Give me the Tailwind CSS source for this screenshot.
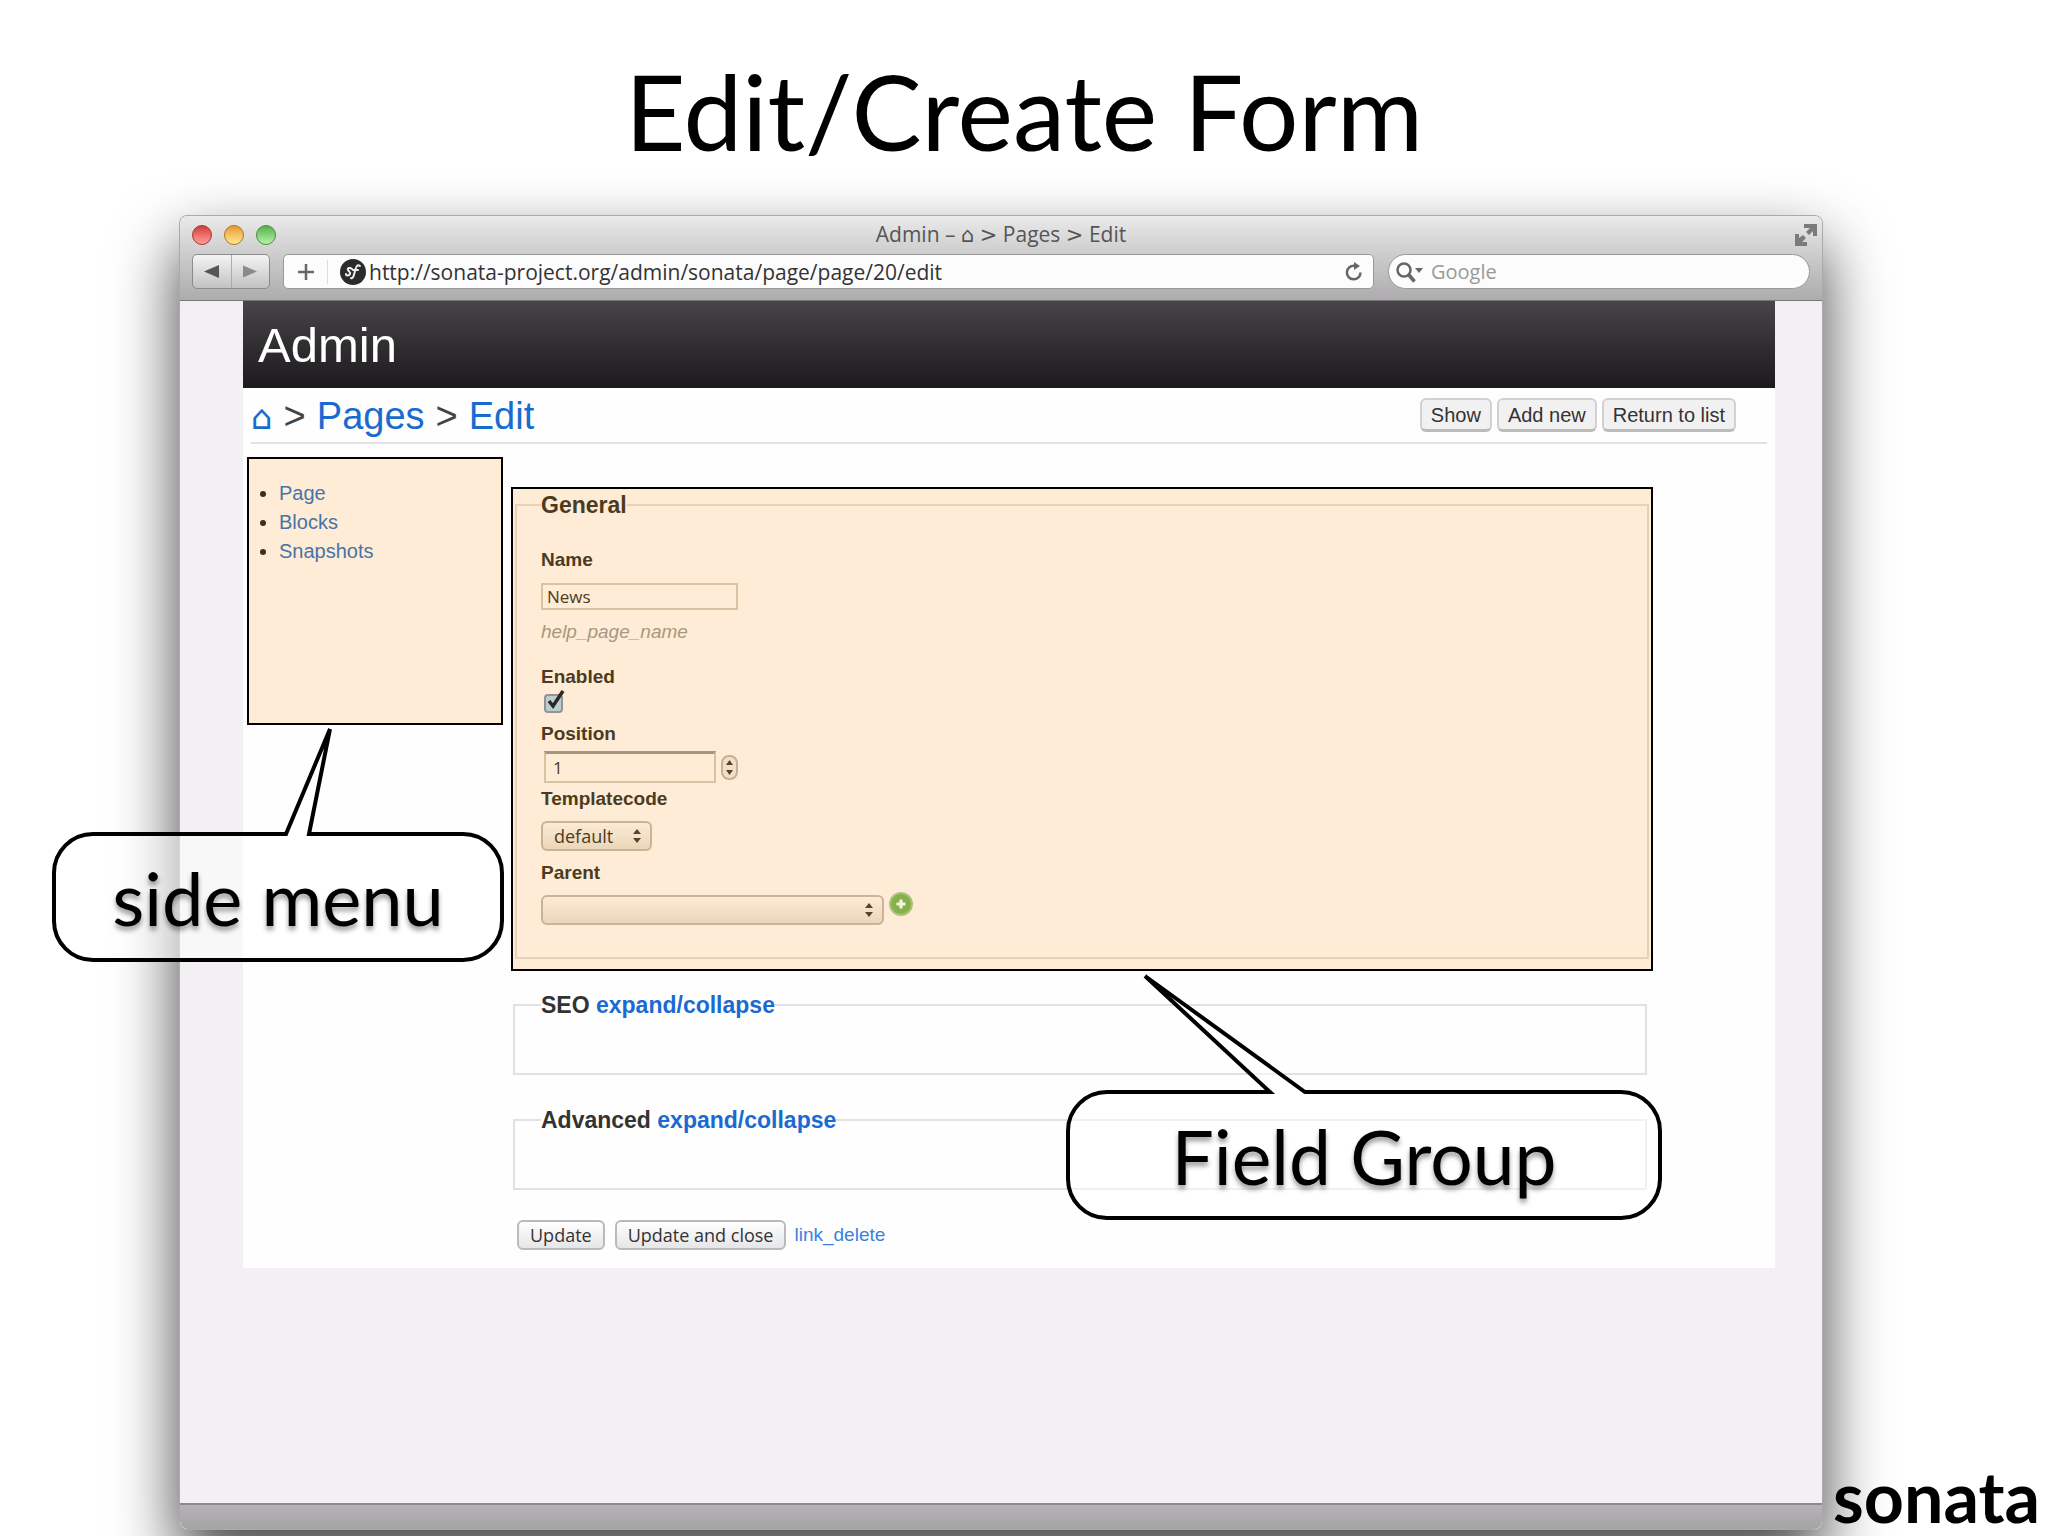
<!DOCTYPE html>
<html lang="en">
<head>
  <meta charset="UTF-8" />
  <meta name="viewport" content="width=device-width, initial-scale=1.0" />
  <title>Edit/Create Form</title>
  <script src="https://cdn.jsdelivr.net/npm/@tailwindcss/browser@4"></script>
</head>
<body class="bg-white font-['Liberation_Sans',Arial,sans-serif] text-[19px] text-[#333]">
  <main class="relative flex min-h-screen flex-col overflow-hidden pb-[6px]">
    <h1 class="pt-[46px] text-center font-[Lato,sans-serif] text-[105px] leading-[128px] text-black">Edit/Create Form</h1>

    <!-- browser window -->
    <div class="mt-[41px] mr-[225px] ml-[179px] flex flex-1 flex-col rounded-lg border border-[#aaa] bg-[#f2f0f3] shadow-[0_30px_64px_0_rgba(0,0,0,0.75)]">
      <header class="rounded-t-lg border-b border-[#777] bg-linear-to-b from-[#eaeaea] to-[#adabad] px-[12px] pb-[11px] font-['Open_Sans',sans-serif]">
        <div class="flex h-[38px] items-center justify-between">
          <div class="flex w-[90px] gap-[12px]">
            <span class="size-[20px] rounded-full border border-[#a33] bg-linear-to-b from-[#d33b3b] to-[#ff9d96]"></span>
            <span class="size-[20px] rounded-full border border-[#a8752a] bg-linear-to-b from-[#e69a2e] to-[#ffe98f]"></span>
            <span class="size-[20px] rounded-full border border-[#4a8a3f] bg-linear-to-b from-[#55b04c] to-[#b5f3a6]"></span>
          </div>
          <div class="text-[21px] text-[#555]">Admin – <span class="font-['DejaVu_Sans',sans-serif]">⌂</span> <span class="font-['DejaVu_Sans',sans-serif]">&gt;</span> Pages <span class="font-['DejaVu_Sans',sans-serif]">&gt;</span> Edit</div>
          <div class="flex w-[90px] justify-end">
            <svg class="-mr-2 size-[24px]" viewBox="0 0 24 24" fill="#7b7b7b"><path d="M10 1h13v12h-4V8l-4 4-3-3 4-4h-6zM1 11h4v4l4-3 3 3-4 4h5v4H1z" /></svg>
          </div>
        </div>
        <div class="flex h-[35px] items-stretch">
          <div class="flex w-[78px] rounded-[5px] border border-[#8b8b8b] bg-linear-to-b from-[#f4f4f4] to-[#c2c2c2]">
            <button aria-label="Back" class="flex flex-1 items-center justify-center border-r border-[#aaa]"><svg class="h-[13px] w-[15px]" viewBox="0 0 15 13" fill="#555"><path d="M0 6.500 15 0v13z" /></svg></button>
            <button aria-label="Forward" class="flex flex-1 items-center justify-center"><svg class="h-[13px] w-[14px]" viewBox="0 0 15 13" fill="#8b8b8b"><path d="M15 6.500 0 0v13z" /></svg></button>
          </div>
          <div class="ml-[13px] flex flex-1 items-center rounded-[5px] border border-[#999] bg-[#fdfcfd]">
            <button aria-label="New bookmark" class="flex h-[24px] w-[44px] items-center justify-center border-r border-[#ddd]"><svg class="size-[16px]" viewBox="0 0 16 16" stroke="#666" stroke-width="2.500"><path d="M8 0v16M0 8h16" /></svg></button>
            <svg class="ml-[12px] size-[26px]" viewBox="0 0 26 26" fill="none" stroke="#eee" stroke-width="2" stroke-linecap="round"><circle cx="13" cy="13" r="13" fill="#2b2b2b" stroke="none" /><path d="M12 10c-2-2-5-1-4 1s3 2 2 4-4 2-4 0M20 7c-3-2-4 1-5 5s-2 8-4 7M13 11h5" /></svg>
            <input aria-label="Address" value="http://sonata-project.org/admin/sonata/page/page/20/edit" class="ml-[3px] flex-1 bg-transparent text-[21px] leading-[28px] text-[#333] outline-none" />
            <button aria-label="Reload" class="mr-[9px]"><svg class="size-[20px]" viewBox="0 0 20 20" fill="none" stroke="#666" stroke-width="2.500"><path d="M16.500 10.500a6.800 6.800 0 1 1-6-6.700" /><path d="M10 0v8l6-4z" fill="#666" stroke="none" /></svg></button>
          </div>
          <div class="ml-[14px] flex w-[422px] items-center rounded-full border border-[#999] bg-[#fdfcfd] pl-[6px]">
            <svg class="h-[22px] w-[28px]" viewBox="0 0 28 22" fill="none" stroke="#666" stroke-width="2.500"><circle cx="9" cy="9" r="6.500" /><path d="m13.500 13.500 6 7" stroke-width="3.500" /><path d="M20 7h8l-4 5z" fill="#666" stroke="none" /></svg>
            <input type="search" aria-label="Search" placeholder="Google" class="ml-[8px] flex-1 bg-transparent text-[20px] leading-[28px] outline-none placeholder:text-[#999]" />
          </div>
        </div>
      </header>

      <div class="mr-[47px] ml-[63px] bg-[#fefefe] pb-[18px]">
        <div class="flex h-[87px] items-center bg-linear-to-b from-[#474547] to-[#1c1a1d] px-[15px] pt-[3px] text-[49px] text-white">Admin</div>

        <!-- breadcrumb and page actions -->
        <div class="mr-[8px] ml-[8px] flex h-[56px] items-center justify-between border-b-2 border-[#e2e0e4] pr-[31px]">
          <nav class="flex items-baseline gap-[11px] pt-[3px] text-[38px] text-[#444]">
            <a href="#" class="font-['DejaVu_Sans',sans-serif] text-[34px] leading-[40px] text-[#1a6bd0]">⌂</a>
            <span>&gt;</span>
            <a href="#" class="text-[#1a6bd0]">Pages</a>
            <span>&gt;</span>
            <a href="#" class="text-[#1a6bd0]">Edit</a>
          </nav>
          <div class="flex gap-[5px] text-[20px]">
            <button class="h-[34px] rounded-[6px] border-2 border-b-[3px] border-[#d2d0d3] border-b-[#bbb] bg-[#f2f1f2] px-[9px] leading-[26px]">Show</button>
            <button class="h-[34px] rounded-[6px] border-2 border-b-[3px] border-[#d2d0d3] border-b-[#bbb] bg-[#f2f1f2] px-[9px] leading-[26px]">Add new</button>
            <button class="h-[34px] rounded-[6px] border-2 border-b-[3px] border-[#d2d0d3] border-b-[#bbb] bg-[#f2f1f2] px-[9px] leading-[26px]">Return to list</button>
          </div>
        </div>

        <div class="flex items-start gap-[8px] pt-[13px] pl-[4px]">
          <aside class="relative h-[268px] w-[256px] border-2 border-black bg-[#feecd6] pt-[20px] pl-[30px]">
            <ul class="list-disc text-[20px] leading-[29px] marker:text-[#3f2f18]">
              <li><a href="#" class="text-[#4674a8]">Page</a></li>
              <li><a href="#" class="text-[#4674a8]">Blocks</a></li>
              <li><a href="#" class="text-[#4674a8]">Snapshots</a></li>
            </ul>
            <!-- callout: side menu -->
            <div class="absolute top-[267px] -left-[197px] z-10 flex h-[236px] w-[452px] items-end">
              <svg class="absolute inset-0 size-full" viewBox="0 0 452 236" fill="#fff" fill-opacity="0.5" stroke="#000" stroke-width="4"><path d="M41 108H234L278 3 257 108H411A39 39 0 0 1 450 147V195A39 39 0 0 1 411 234H41A39 39 0 0 1 2 195V147A39 39 0 0 1 41 108Z" /></svg>
              <p class="relative w-full text-center font-[Lato,sans-serif] text-[74px] leading-[128px] text-black text-shadow-[0_4px_5px_rgba(0,0,0,0.4)]">side menu</p>
            </div>
          </aside>

          <form class="relative mt-[30px] mr-[122px] flex-1">
            <div class="border-2 border-black bg-[#feecd6] px-[2px] pt-[2px] pb-[10px]">
              <fieldset class="h-[468px] border-2 border-[#e6d2b8] pl-[24px]">
                <legend class="text-[23px] leading-[28px] font-bold text-[#4c3b20]">General</legend>
                <div class="flex flex-col items-start text-[#4c3b20]">
                  <label for="name" class="mt-[29px] leading-[24px] font-bold">Name</label>
                  <input id="name" value="News" class="mt-[11px] h-[27px] w-[197px] border-2 border-[#d8c2a4] px-[4px] font-['Open_Sans',sans-serif] text-[17px]" />
                  <p class="mt-[10px] leading-[24px] text-[#a89880] italic">help_page_name</p>
                  <label for="enabled" class="mt-[21px] leading-[24px] font-bold">Enabled</label>
                  <span class="relative mt-[5px] ml-[3px] flex">
                    <input id="enabled" type="checkbox" checked class="size-[19px] appearance-none rounded-[4px] border-2 border-[#9a8f96] bg-[#b9cfd2]" />
                    <svg class="pointer-events-none absolute -top-[4px] left-0 size-[22px]" viewBox="0 0 22 22" fill="none" stroke="#2a2a22" stroke-width="3.500"><path d="m5 11 4 5L19 1" /></svg>
                  </span>
                  <label for="position" class="mt-[9px] leading-[24px] font-bold">Position</label>
                  <div class="mt-[5px] ml-[3px] flex items-center gap-[5px]">
                    <input id="position" type="number" value="1" class="h-[32px] w-[172px] [appearance:textfield] border-2 border-t-[3px] border-[#d8c2a4] border-t-[#a8967c] px-[7px] font-['Open_Sans',sans-serif] text-[17px]" />
                    <button type="button" aria-label="Step"><svg class="h-[25px] w-[17px]" viewBox="0 0 17 25"><rect x="1" y="1" width="15" height="23" rx="7" fill="#f3dfc6" stroke="#c4b195" stroke-width="2" /><path d="M8.500 5l3.500 5H5zM8.500 20 5 15h7z" fill="#55452f" /></svg></button>
                  </div>
                  <label for="template" class="mt-[4px] leading-[24px] font-bold">Templatecode</label>
                  <span class="relative mt-[10px] flex">
                    <select id="template" class="h-[30px] w-[111px] appearance-none rounded-[6px] border-2 border-[#c9b496] bg-linear-to-b from-[#fcebd5] to-[#ecd6ba] pl-[11px] font-['Open_Sans',sans-serif] text-[18px] leading-[24px]"><option>default</option></select>
                    <svg class="pointer-events-none absolute top-[8px] right-[11px] h-[14px] w-[8px]" viewBox="0 0 8 14" fill="#55452f"><path d="m4 0 4 5H0zM4 14 0 9h8z" /></svg>
                  </span>
                  <label for="parent" class="mt-[10px] leading-[24px] font-bold">Parent</label>
                  <div class="mt-[10px] flex gap-[5px]">
                    <span class="relative flex">
                      <select id="parent" class="h-[30px] w-[343px] appearance-none rounded-[6px] border-2 border-[#c9b496] bg-linear-to-b from-[#fcebd5] to-[#ecd6ba]"><option></option></select>
                      <svg class="pointer-events-none absolute top-[8px] right-[11px] h-[14px] w-[8px]" viewBox="0 0 8 14" fill="#55452f"><path d="m4 0 4 5H0zM4 14 0 9h8z" /></svg>
                    </span>
                    <button type="button" aria-label="Add parent" class="flex self-start"><svg class="-mt-[3px] size-[24px]" viewBox="0 0 24 24"><circle cx="12" cy="12" r="11" fill="#86b04a" stroke="#a9c47c" stroke-width="2" /><path d="M12 7.500v9M7.500 12h9" stroke="#f6f3dc" stroke-width="3" /></svg></button>
                  </div>
                </div>
              </fieldset>
            </div>

            <fieldset class="mt-[20px] mr-[6px] ml-[2px] h-[84px] border-2 border-[#e2e0e4] pl-[26px]">
              <legend class="text-[23px] leading-[28px] font-bold">SEO <a href="#" class="text-[#1a6bd0]">expand/collapse</a></legend>
            </fieldset>
            <fieldset class="mt-[31px] mr-[6px] ml-[2px] h-[84px] border-2 border-[#e2e0e4] pl-[26px]">
              <legend class="text-[23px] leading-[28px] font-bold">Advanced <a href="#" class="text-[#1a6bd0]">expand/collapse</a></legend>
            </fieldset>

            <div class="mt-[30px] ml-[6px] flex items-center">
              <button type="button" class="h-[30px] rounded-[6px] border-2 border-[#bbb9bc] bg-linear-to-b from-white to-[#e6e5e7] px-[11px] font-['Open_Sans',sans-serif] text-[18px] leading-[24px]">Update</button>
              <button type="button" class="ml-[10px] h-[30px] rounded-[6px] border-2 border-[#bbb9bc] bg-linear-to-b from-white to-[#e6e5e7] px-[11px] font-['Open_Sans',sans-serif] text-[18px] leading-[24px]">Update and close</button>
              <a href="#" class="ml-[8px] text-[#3a82dc]">link_delete</a>
            </div>

            <!-- callout: field group -->
            <div class="absolute top-[487px] -right-[9px] z-10 flex h-[246px] w-[596px] items-end">
              <svg class="absolute inset-0 size-full" viewBox="0 0 596 246" fill="#fff" fill-opacity="0.5" stroke="#000" stroke-width="4"><path d="M41 118H204L79 2 239 118H555A39 39 0 0 1 594 157V205A39 39 0 0 1 555 244H41A39 39 0 0 1 2 205V157A39 39 0 0 1 41 118Z" /></svg>
              <p class="relative w-full text-center font-[Lato,sans-serif] text-[75px] leading-[128px] text-black text-shadow-[0_4px_5px_rgba(0,0,0,0.4)]">Field Group</p>
            </div>
          </form>
        </div>
      </div>

      <footer class="mt-auto h-[26px] rounded-b-lg border-t-2 border-[#8b898c] bg-linear-to-b from-[#b5b3b6] to-[#a5a3a6]"></footer>
    </div>

    <div class="absolute right-[8px] bottom-0 font-[Lato,sans-serif] text-[70px] leading-[80px] font-bold text-black">sonata</div>
  </main>
</body>
</html>
